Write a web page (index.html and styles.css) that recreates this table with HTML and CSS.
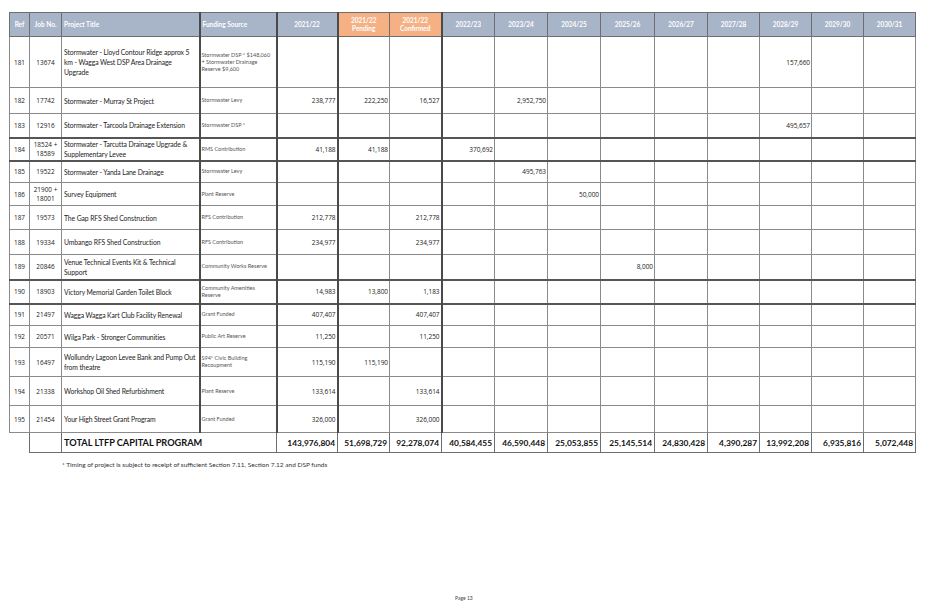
FILE: index.html
```html
<!DOCTYPE html>
<html lang="en">
<head>
<meta charset="utf-8">
<title>LTFP Capital Program</title>
<link rel="stylesheet" href="styles.css">
</head>
<body>
<div class="page">
<table class="ltfp">
<colgroup>
<col class="c-ref"><col class="c-job"><col class="c-title"><col class="c-fund">
<col class="c-61"><col class="c-52"><col class="c-52"><col class="c-53"><col class="c-53"><col class="c-53"><col class="c-54"><col class="c-53"><col class="c-52"><col class="c-52"><col class="c-52"><col class="c-52">
</colgroup>
<thead>
<tr class="hd">
<th class="ctr">Ref</th><th class="ctr">Job No.</th><th class="left">Project Title</th><th class="left thick-l">Funding Source</th>
<th class="thick-l">2021/22</th><th class="orange thick-l">2021/22<br>Pending</th><th class="orange">2021/22<br>Confirmed</th>
<th class="thick-l">2022/23</th><th>2023/24</th><th>2024/25</th><th>2025/26</th><th>2026/27</th><th>2027/28</th><th>2028/29</th><th>2029/30</th><th>2030/31</th>
</tr>
</thead>
<tbody>
<tr class="h51 lt">
<td class="ctr">181</td><td class="ctr">13674</td><td class="title">Stormwater - Lloyd Contour Ridge approx 5 km - Wagga West DSP Area Drainage<br>Upgrade</td><td class="fund thick-l">Stormwater DSP * $148,060 + Stormwater Drainage Reserve $9,600</td>
<td class="num thick-l"></td><td class="num thick-l"></td><td class="num"></td><td class="num thick-l"></td><td class="num"></td><td class="num"></td><td class="num"></td><td class="num"></td><td class="num"></td><td class="num">157,660</td><td class="num"></td><td class="num"></td>
</tr>
<tr class="h26 lt">
<td class="ctr">182</td><td class="ctr">17742</td><td class="title">Stormwater - Murray St Project</td><td class="fund thick-l">Stormwater Levy</td>
<td class="num thick-l">238,777</td><td class="num thick-l">222,250</td><td class="num">16,527</td><td class="num thick-l"></td><td class="num">2,952,750</td><td class="num"></td><td class="num"></td><td class="num"></td><td class="num"></td><td class="num"></td><td class="num"></td><td class="num"></td>
</tr>
<tr class="h24 lt">
<td class="ctr">183</td><td class="ctr">12916</td><td class="title">Stormwater - Tarcoola Drainage Extension</td><td class="fund thick-l">Stormwater DSP *</td>
<td class="num thick-l"></td><td class="num thick-l"></td><td class="num"></td><td class="num thick-l"></td><td class="num"></td><td class="num"></td><td class="num"></td><td class="num"></td><td class="num"></td><td class="num">495,657</td><td class="num"></td><td class="num"></td>
</tr>
<tr class="h23 dk">
<td class="ctr">184</td><td class="ctr">18524 +<br>18589</td><td class="title">Stormwater - Tarcutta Drainage Upgrade &amp; Supplementary Levee</td><td class="fund thick-l">RMS Contribution</td>
<td class="num thick-l">41,188</td><td class="num thick-l">41,188</td><td class="num"></td><td class="num thick-l">370,692</td><td class="num"></td><td class="num"></td><td class="num"></td><td class="num"></td><td class="num"></td><td class="num"></td><td class="num"></td><td class="num"></td>
</tr>
<tr class="h22 dk">
<td class="ctr">185</td><td class="ctr">19522</td><td class="title">Stormwater - Yanda Lane Drainage</td><td class="fund thick-l">Stormwater Levy</td>
<td class="num thick-l"></td><td class="num thick-l"></td><td class="num"></td><td class="num thick-l"></td><td class="num">495,763</td><td class="num"></td><td class="num"></td><td class="num"></td><td class="num"></td><td class="num"></td><td class="num"></td><td class="num"></td>
</tr>
<tr class="h23 lt">
<td class="ctr">186</td><td class="ctr">21900 +<br>18001</td><td class="title">Survey Equipment</td><td class="fund thick-l">Plant Reserve</td>
<td class="num thick-l"></td><td class="num thick-l"></td><td class="num"></td><td class="num thick-l"></td><td class="num"></td><td class="num">50,000</td><td class="num"></td><td class="num"></td><td class="num"></td><td class="num"></td><td class="num"></td><td class="num"></td>
</tr>
<tr class="h24 lt">
<td class="ctr">187</td><td class="ctr">19573</td><td class="title">The Gap RFS Shed Construction</td><td class="fund thick-l">RFS Contribution</td>
<td class="num thick-l">212,778</td><td class="num thick-l"></td><td class="num">212,778</td><td class="num thick-l"></td><td class="num"></td><td class="num"></td><td class="num"></td><td class="num"></td><td class="num"></td><td class="num"></td><td class="num"></td><td class="num"></td>
</tr>
<tr class="h25 lt">
<td class="ctr">188</td><td class="ctr">19334</td><td class="title">Umbango RFS Shed Construction</td><td class="fund thick-l">RFS Contribution</td>
<td class="num thick-l">234,977</td><td class="num thick-l"></td><td class="num">234,977</td><td class="num thick-l"></td><td class="num"></td><td class="num"></td><td class="num"></td><td class="num"></td><td class="num"></td><td class="num"></td><td class="num"></td><td class="num"></td>
</tr>
<tr class="h25 lt">
<td class="ctr">189</td><td class="ctr">20846</td><td class="title">Venue Technical Events Kit &amp; Technical Support</td><td class="fund thick-l">Community Works Reserve</td>
<td class="num thick-l"></td><td class="num thick-l"></td><td class="num"></td><td class="num thick-l"></td><td class="num"></td><td class="num"></td><td class="num">8,000</td><td class="num"></td><td class="num"></td><td class="num"></td><td class="num"></td><td class="num"></td>
</tr>
<tr class="h24 dk">
<td class="ctr">190</td><td class="ctr">18903</td><td class="title">Victory Memorial Garden Toilet Block</td><td class="fund thick-l">Community Amenities Reserve</td>
<td class="num thick-l">14,983</td><td class="num thick-l">13,800</td><td class="num">1,183</td><td class="num thick-l"></td><td class="num"></td><td class="num"></td><td class="num"></td><td class="num"></td><td class="num"></td><td class="num"></td><td class="num"></td><td class="num"></td>
</tr>
<tr class="h22 dk">
<td class="ctr">191</td><td class="ctr">21497</td><td class="title">Wagga Wagga Kart Club Facility Renewal</td><td class="fund thick-l">Grant Funded</td>
<td class="num thick-l">407,407</td><td class="num thick-l"></td><td class="num">407,407</td><td class="num thick-l"></td><td class="num"></td><td class="num"></td><td class="num"></td><td class="num"></td><td class="num"></td><td class="num"></td><td class="num"></td><td class="num"></td>
</tr>
<tr class="h22 lt">
<td class="ctr">192</td><td class="ctr">20571</td><td class="title">Wilga Park - Stronger Communities</td><td class="fund thick-l">Public Art Reserve</td>
<td class="num thick-l">11,250</td><td class="num thick-l"></td><td class="num">11,250</td><td class="num thick-l"></td><td class="num"></td><td class="num"></td><td class="num"></td><td class="num"></td><td class="num"></td><td class="num"></td><td class="num"></td><td class="num"></td>
</tr>
<tr class="h29 lt">
<td class="ctr">193</td><td class="ctr">16497</td><td class="title">Wollundry Lagoon Levee Bank and Pump Out from theatre</td><td class="fund thick-l">S94* Civic Building Recoupment</td>
<td class="num thick-l">115,190</td><td class="num thick-l">115,190</td><td class="num"></td><td class="num thick-l"></td><td class="num"></td><td class="num"></td><td class="num"></td><td class="num"></td><td class="num"></td><td class="num"></td><td class="num"></td><td class="num"></td>
</tr>
<tr class="h29 lt">
<td class="ctr">194</td><td class="ctr">21338</td><td class="title">Workshop Oil Shed Refurbishment</td><td class="fund thick-l">Plant Reserve</td>
<td class="num thick-l">133,614</td><td class="num thick-l"></td><td class="num">133,614</td><td class="num thick-l"></td><td class="num"></td><td class="num"></td><td class="num"></td><td class="num"></td><td class="num"></td><td class="num"></td><td class="num"></td><td class="num"></td>
</tr>
<tr class="h27 lt">
<td class="ctr">195</td><td class="ctr">21454</td><td class="title">Your High Street Grant Program</td><td class="fund thick-l">Grant Funded</td>
<td class="num thick-l">326,000</td><td class="num thick-l"></td><td class="num">326,000</td><td class="num thick-l"></td><td class="num"></td><td class="num"></td><td class="num"></td><td class="num"></td><td class="num"></td><td class="num"></td><td class="num"></td><td class="num"></td>
</tr>
<tr class="h20 total">
<td class="blank"></td><td class="job-empty"></td><td class="total-label" colspan="2">TOTAL LTFP CAPITAL PROGRAM</td>
<td class="tnum">143,976,804</td><td class="tnum">51,698,729</td><td class="tnum">92,278,074</td><td class="tnum">40,584,455</td><td class="tnum">46,590,448</td><td class="tnum">25,053,855</td><td class="tnum">25,145,514</td><td class="tnum">24,830,428</td><td class="tnum">4,390,287</td><td class="tnum">13,992,208</td><td class="tnum">6,935,816</td><td class="tnum">5,072,448</td>
</tr>
</tbody>
</table>
<p class="note">* Timing of project is subject to receipt of sufficient Section 7.11, Section 7.12 and DSP funds</p>
<p class="page-no">Page 13</p>
</div>
</body>
</html>
```
FILE: styles.css
```css
html, body {
  margin: 0;
  padding: 0;
  background: #ffffff;
}

.page {
  width: 928px;
  height: 609px;
  box-sizing: border-box;
  padding: 12px 0 0 9px;
  display: flex;
  flex-direction: column;
  font-family: Lato, "Open Sans", "Liberation Sans", sans-serif;
  color: #222;
}

.ltfp {
  border-collapse: collapse;
  table-layout: fixed;
  width: 906px;
}

.c-ref { width: 20px; }
.c-job { width: 32px; }
.c-title { width: 138px; }
.c-fund { width: 77px; }
.c-61 { width: 61px; }
.c-52 { width: 52px; }
.c-53 { width: 53px; }
.c-54 { width: 54px; }

.ltfp th,
.ltfp td {
  border: 1px solid #8a8a8a;
  padding: 0 1px;
  vertical-align: middle;
  overflow: hidden;
}

.hd {
  height: 24px;
}

.ltfp th {
  background: #a8b4c8;
  color: #ffffff;
  font-size: 6.5px;
  font-weight: 700;
  line-height: 8px;
  text-align: center;
  border-color: #6e6e6e;
}

.ltfp th.left {
  text-align: left;
  padding-left: 2px;
}

.ltfp th.orange {
  background: #f5b184;
}

.ltfp .thick-l {
  border-left: 2px solid #4a4a4a;
}

.ltfp tr.dk td {
  border-top: 2px solid #555;
}

.ltfp tr.lt td {
  border-top-color: #9a9a9a;
}

.h51 { height: 51px; }
.h29 { height: 29px; }
.h27 { height: 27px; }
.h26 { height: 26px; }
.h25 { height: 25px; }
.h24 { height: 24px; }
.h23 { height: 23px; }
.h22 { height: 22px; }
.h20 { height: 20px; }

.ltfp td.ctr {
  text-align: center;
  font-family: "Open Sans", "Liberation Sans", sans-serif;
  font-size: 6.4px;
  line-height: 9px;
  color: #222;
}

.title {
  font-size: 6.8px;
  line-height: 10px;
  letter-spacing: -0.1px;
  color: #1c1c1c;
  text-align: left;
  padding-left: 2px !important;
  padding-right: 0 !important;
}

.fund {
  font-size: 5.5px;
  line-height: 7px;
  color: #555;
  text-align: left;
}

.num {
  font-family: "Open Sans", "Liberation Sans", sans-serif;
  font-size: 6.5px;
  letter-spacing: -0.05px;
  text-align: right;
  color: #222;
  padding-right: 1px !important;
}

.total td {
  border-color: #6e6e6e;
  border-top: 1px solid #6e6e6e;
}

.ltfp .total td.blank {
  border: none;
  border-right: 1px solid #6e6e6e;
  border-top: 1px solid #6e6e6e;
}

.total-label {
  font-size: 9.2px;
  font-weight: 700;
  color: #111;
  padding-left: 2px !important;
}

.tnum {
  font-size: 8.4px;
  font-weight: 700;
  color: #111;
  text-align: right;
  padding-right: 2px !important;
}

.note {
  margin: 8px 0 0 53px;
  font-size: 6.5px;
  color: #333;
}

.page-no {
  margin: auto 0 8px 446px;
  font-size: 5px;
  color: #444;
}
```
